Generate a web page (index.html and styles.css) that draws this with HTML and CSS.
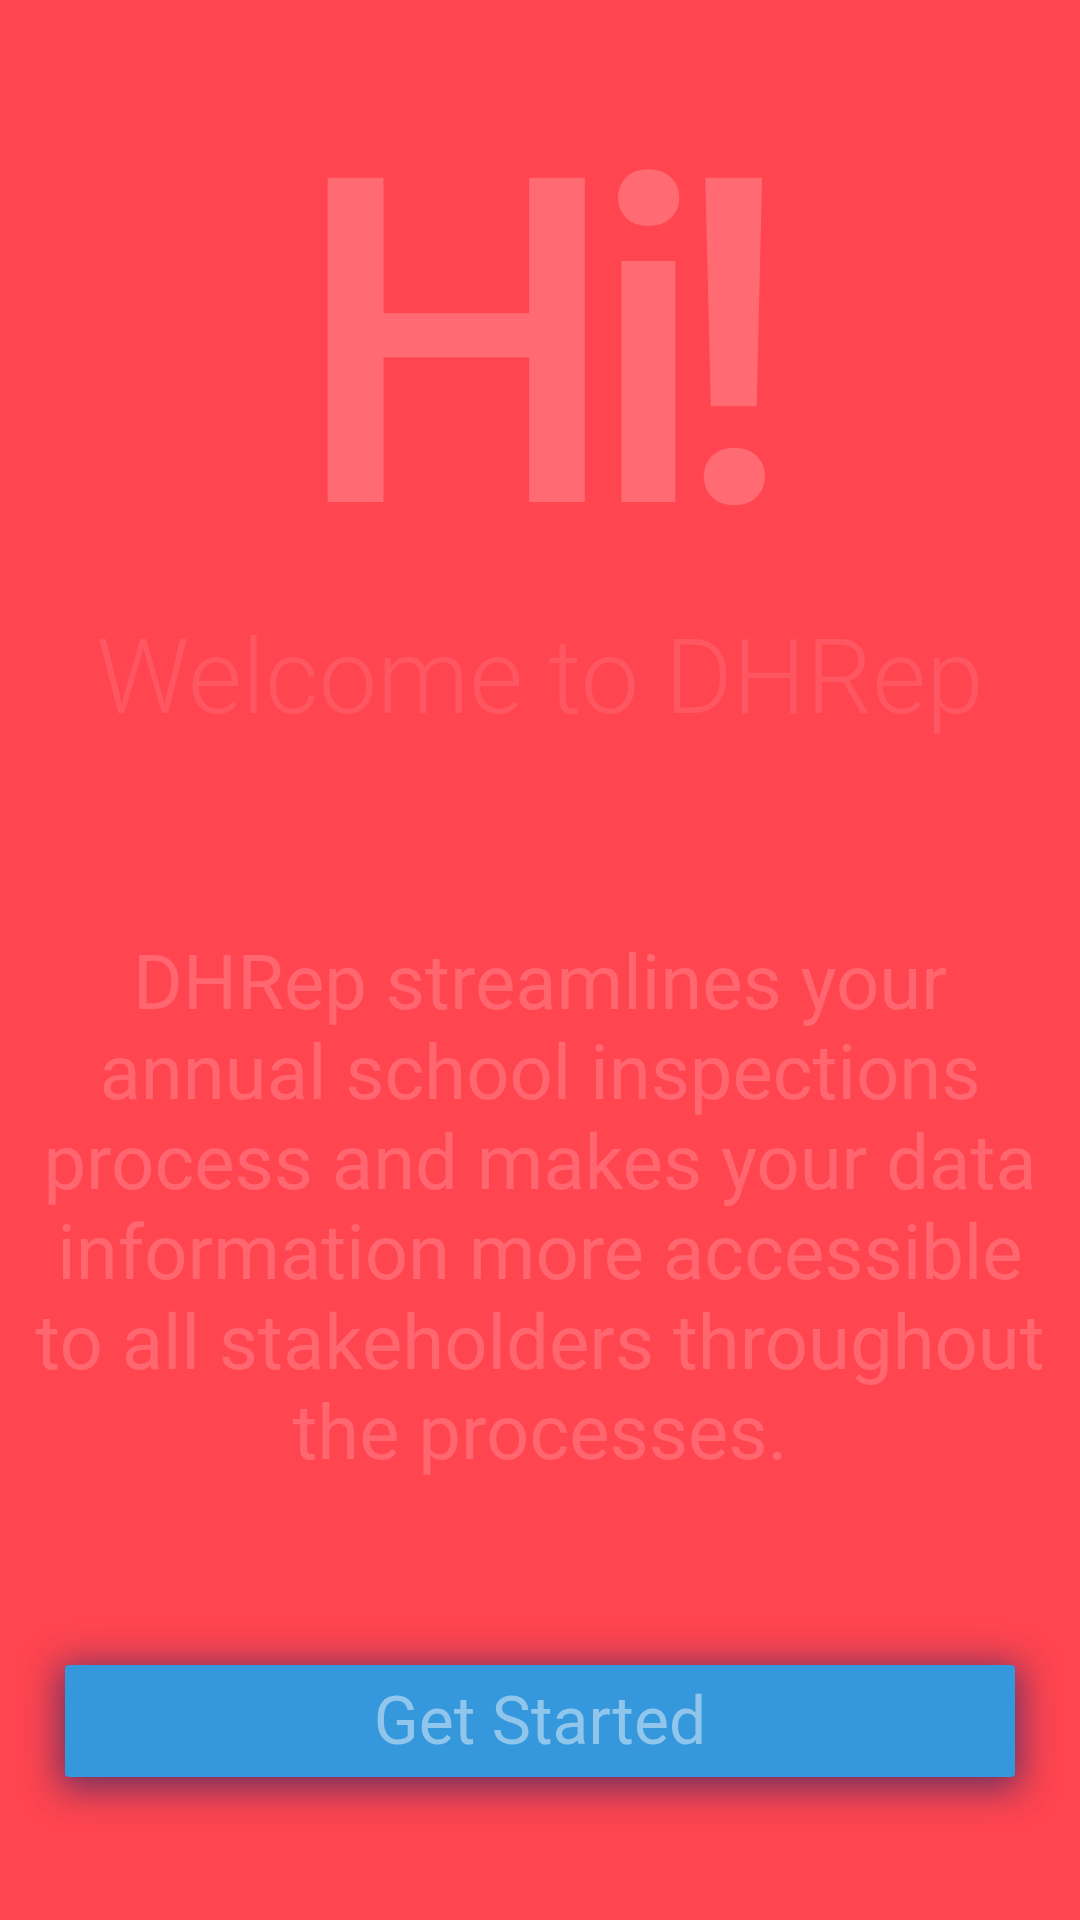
FILE: index.html
```html
<!DOCTYPE html>
<html lang="en">
<head>
<meta charset="utf-8">
<title>Welcome</title>
<link rel="stylesheet" href="styles.css">
</head>
<body>
<main class="screen">
  <h1 class="hi">Hi<span class="bang">!</span></h1>
  <h2 class="welcome">Welcome to DHRep</h2>
  <p class="intro">DHRep streamlines your<br>annual school inspections<br>process and makes your data<br>information more accessible<br>to all stakeholders throughout<br>the processes.</p>
  <button class="cta" type="button">Get Started</button>
</main>
</body>
</html>
```
FILE: styles.css
```css
html, body {
  margin: 0;
  padding: 0;
}
body {
  background: #ff4550;
  font-family: Roboto, "Liberation Sans", sans-serif;
}
.screen {
  width: 1080px;
  height: 1920px;
  display: flex;
  flex-direction: column;
  align-items: center;
  box-sizing: border-box;
  padding-top: 118px;
}
.hi {
  margin: 0 20px 0 0;
  font-size: 456px;
  line-height: 1;
  font-weight: 500;
  color: rgba(255, 255, 255, 0.2);
  letter-spacing: -28px;
}
.bang {
  margin-left: -6px;
}
.welcome {
  margin: 44px 0 0;
  font-size: 104px;
  line-height: 120px;
  font-weight: 300;
  color: rgba(255, 255, 255, 0.1);
}
.intro {
  margin: 200px 0 0;
  font-size: 76px;
  line-height: 90px;
  text-align: center;
  color: rgba(255, 255, 255, 0.18);
}
.cta {
  margin-top: auto;
  margin-bottom: 143px;
  width: 950px;
  height: 112px;
  border: 0;
  border-radius: 4px;
  background: #3597dc;
  box-shadow: 0 6px 36px 6px rgba(50, 40, 100, 0.7);
  color: rgba(255, 255, 255, 0.45);
  font-family: Roboto, "Liberation Sans", sans-serif;
  font-size: 66px;
}
```
